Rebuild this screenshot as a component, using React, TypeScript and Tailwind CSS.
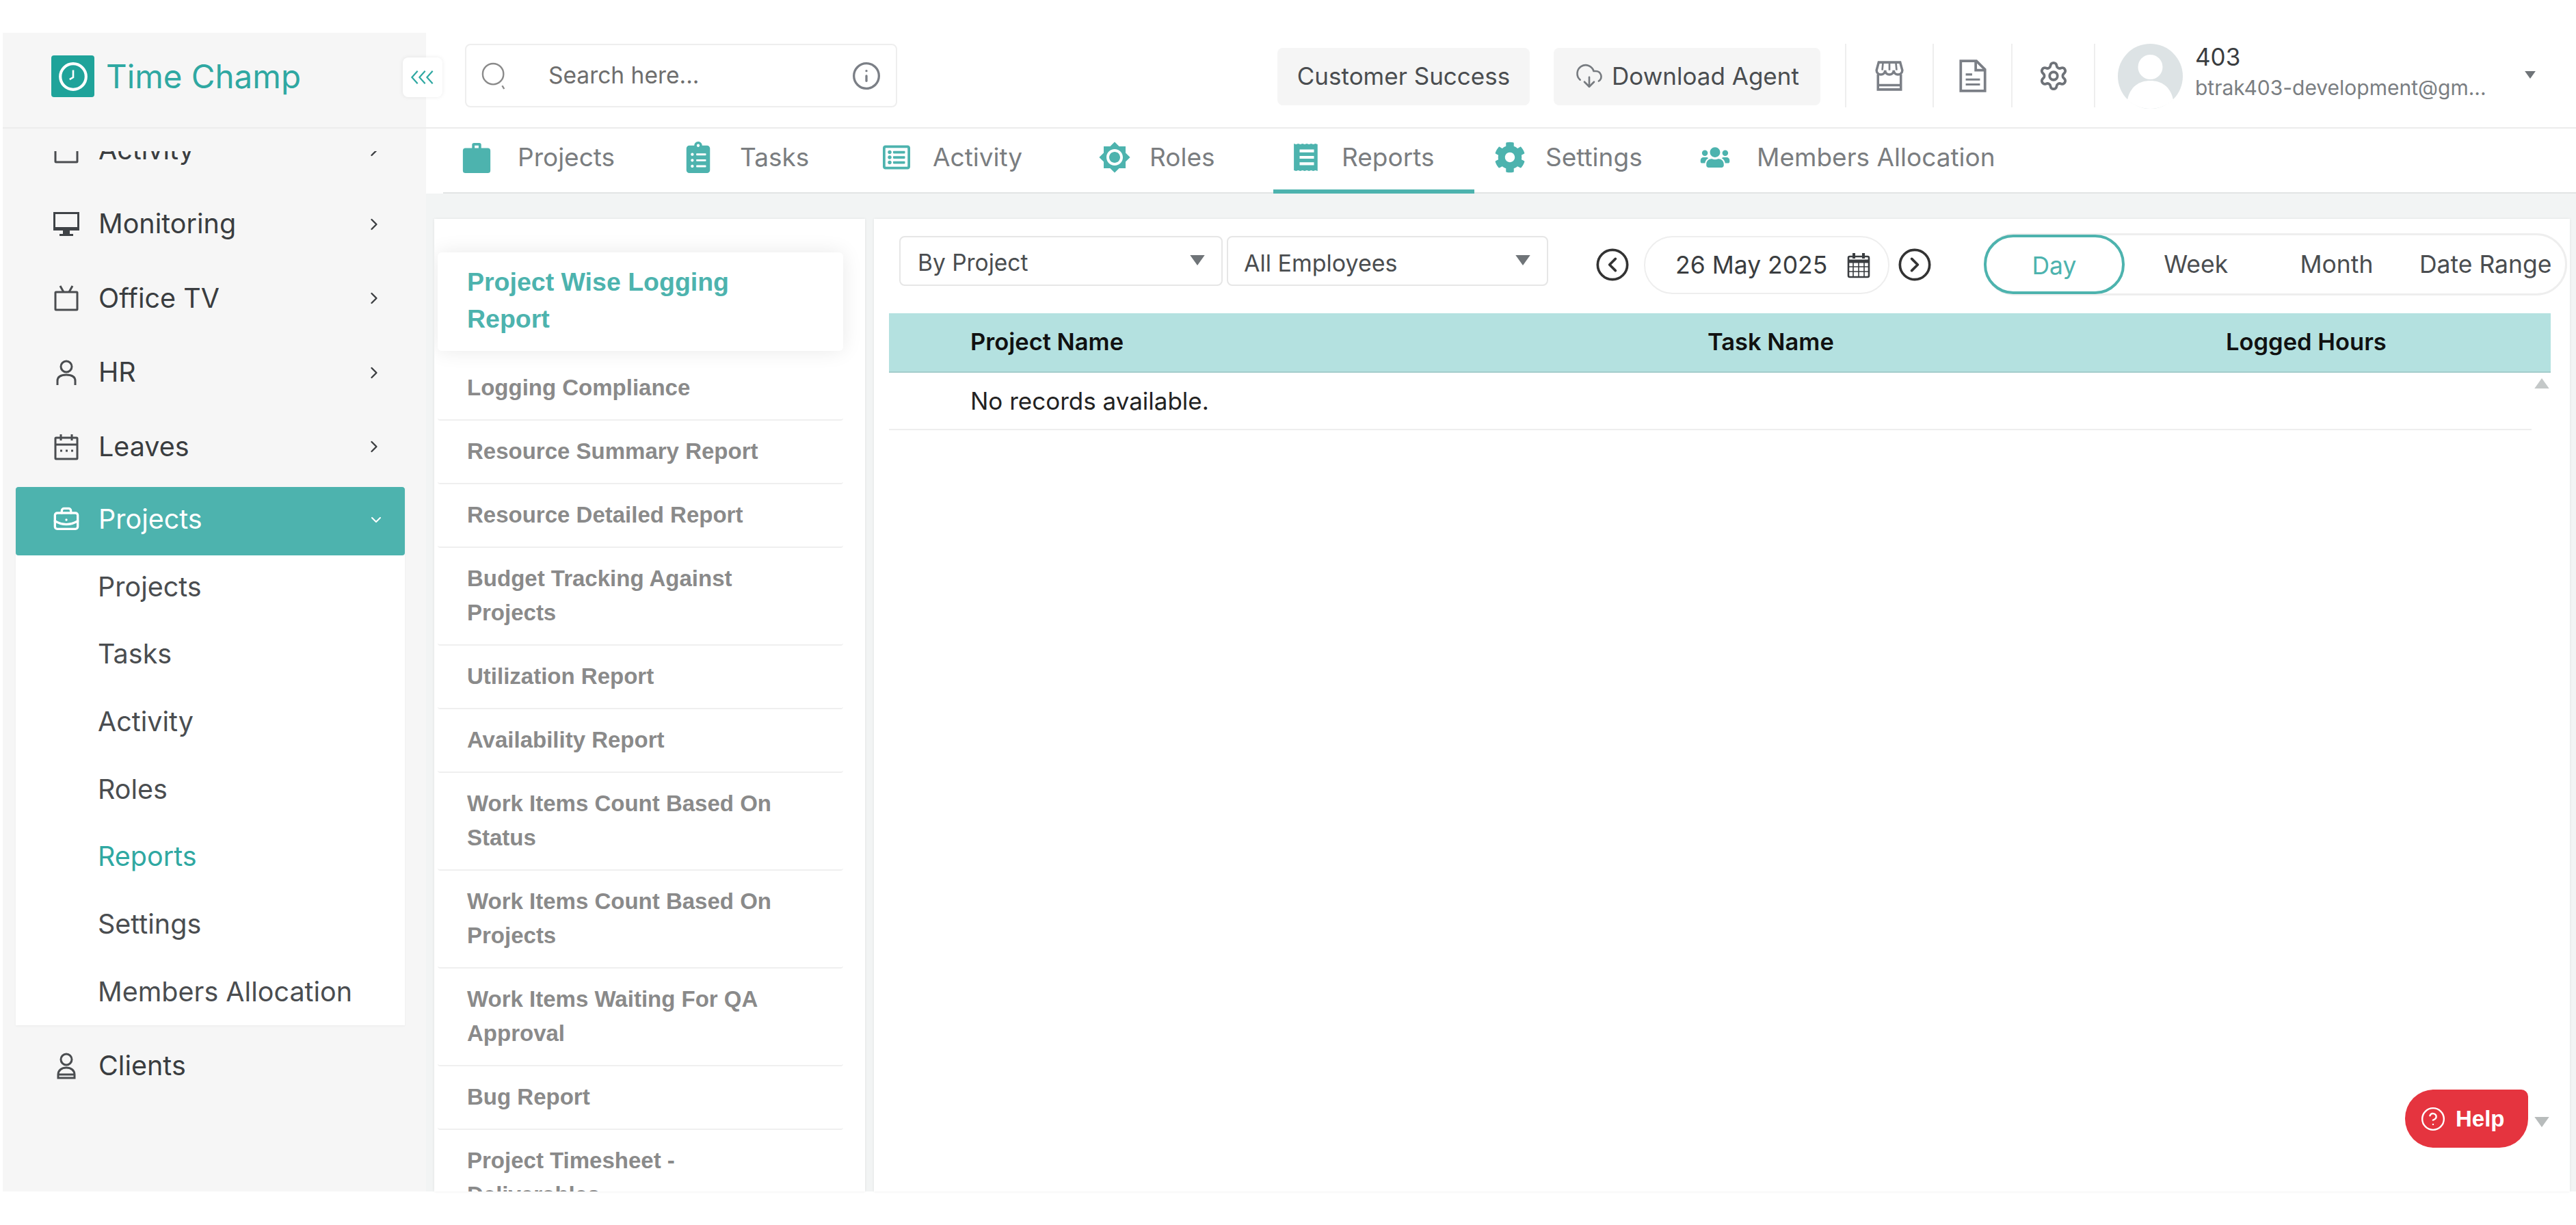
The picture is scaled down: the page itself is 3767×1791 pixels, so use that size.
import React from "react";
import { ChevronRight, ChevronDown, Info, CloudDownload, Settings, CircleChevronLeft, CircleChevronRight, BriefcaseBusiness, CircleHelp } from "lucide-react";
import { FaClipboardList, FaRegListAlt, FaCog, FaUsers } from "react-icons/fa";
import { MdBrightness7 } from "react-icons/md";

const Caret = ({ cls }: { cls: string }) => (
  <svg viewBox="0 0 20 14" className={cls}><path d="M0 0h20L10 14z" fill="currentColor" /></svg>
);

const MonitorIco = () => (
  <svg viewBox="0 0 40 40" className="w-[40px] h-[40px] text-[#3f4347]"><path fill="currentColor" d="M1 2h38v27H1z" /><path fill="#f6f6f6" d="M4 5h32v19H4z" /><path fill="currentColor" d="M15 29h10v5h5v3H10v-3h5z" /></svg>
);
const TvIco = () => (
  <svg viewBox="0 0 40 40" className="w-[40px] h-[40px] text-[#4a4d50]" fill="none" stroke="currentColor" strokeWidth="3"><rect x="4" y="11" width="32" height="26" rx="1" /><path d="M11 2l5 9M29 2l-5 9" /></svg>
);
const UserIco = () => (
  <svg viewBox="0 0 40 40" className="w-[40px] h-[40px] text-[#4a4d50]" fill="none" stroke="currentColor" strokeWidth="3"><circle cx="20" cy="11" r="8" /><path d="M7 38v-6c0-6 5-9 13-9s13 3 13 9v6" /></svg>
);
const CalIco = () => (
  <svg viewBox="0 0 40 40" className="w-[40px] h-[40px] text-[#4a4d50]" fill="none" stroke="currentColor" strokeWidth="3"><rect x="4" y="7" width="32" height="31" rx="1" /><path d="M4 17h32M12 2v9M28 2v9M11 26h3M19 26h3M27 26h3" /></svg>
);
const ClientIco = () => (
  <svg viewBox="0 0 40 40" className="w-[40px] h-[40px] text-[#4a4d50]" fill="none" stroke="currentColor" strokeWidth="3"><circle cx="20" cy="11" r="8" /><path d="M8 38v-5c0-6 5-10 12-10s12 4 12 10v5z" /><path d="M8 33h24" /></svg>
);
const SearchIco = () => (
  <svg viewBox="0 0 40 46" className="w-[38px] h-[46px] text-[#8a8a8a]" fill="none" stroke="currentColor" strokeWidth="2.5"><circle cx="18" cy="20" r="16" /><path d="M32 38l3 5" /></svg>
);
const ReportIco = () => (
  <svg viewBox="0 0 36 40" className="w-[38px] h-[42px] text-[#4db3ae]"><path fill="currentColor" d="M0 1l3 1 3-1 3 1 3-1 3 1 3-1 3 1 3-1 3 1 3-1 3 1v37l-3-1-3 1-3-1-3 1-3-1-3 1-3-1-3 1-3-1-3 1-3-1z" /><path fill="#fff" d="M8 9h20v4H8zM8 18h20v4H8zM8 27h20v4H8z" /></svg>
);
const CaseIco = () => (
  <svg viewBox="0 0 42 48" className="w-[42px] h-[46px] text-[#4db3ae]"><path fill="currentColor" d="M14 10V5a3 3 0 0 1 3-3h8a3 3 0 0 1 3 3v5h10a4 4 0 0 1 4 4v30a4 4 0 0 1-4 4H4a4 4 0 0 1-4-4V14a4 4 0 0 1 4-4zm4 0h6V6h-6z" /></svg>
);
const StoreIco = () => (
  <svg viewBox="0 0 44 44" className="w-[46px] h-[46px] text-[#7b7f86]" fill="none" stroke="currentColor" strokeWidth="3.4"><path d="M4 14l3-11h30l3 11c0 4-3 6-6 6s-6-2-6-6c0 4-3 6-6 6s-6-2-6-6c0 4-3 6-6 6s-6-2-6-6z" /><path d="M13 3l-1 11M22 3v11M31 3l1 11" strokeWidth="2.6" /><path d="M6 20v21h32V20M6 35h32" /></svg>
);
const DocIco = () => (
  <svg viewBox="0 0 40 48" className="w-[42px] h-[50px] text-[#7b7f86]" fill="none" stroke="currentColor" strokeWidth="3.6"><path d="M3 3h22l12 12v30H3z" /><path d="M24 3v13h13" /><path d="M10 22h9M10 29h20M10 36h20" strokeWidth="3" /></svg>
);
const CalendarGrid = () => (
  <svg viewBox="0 0 34 38" className="w-[34px] h-[38px] text-[#3a3d40]" fill="none" stroke="currentColor"><rect x="2" y="6" width="30" height="30" rx="2" strokeWidth="2.6" /><path d="M2 13h30" strokeWidth="5" /><path d="M10 1v8M24 1v8" strokeWidth="4" /><path d="M9 15v20M17 15v20M25 15v20M2 21h30M2 28h30" strokeWidth="1.6" /></svg>
);
const ChevLeftTriple = () => (
  <svg viewBox="0 0 40 24" className="w-[38px] h-[22px] text-[#2fa8a2]" fill="none" stroke="currentColor" strokeWidth="2.4"><path d="M12 2L3 12l9 10M24 2l-9 10 9 10M36 2l-9 10 9 10" /></svg>
);
const Logo = () => (
  <div className="w-[63px] h-[61px] bg-[#1fa39a] rounded-[4px] flex items-center justify-center">
    <svg viewBox="0 0 44 44" className="w-[46px] h-[46px]" fill="none" stroke="#fff"><circle cx="22" cy="22" r="18" strokeWidth="4" /><path d="M22 13v10l-5 3" strokeWidth="2.5" /></svg>
  </div>
);

const navRows = [
  { label: "Activity", icon: <TvIco />, mt: "-mt-[54px]" },
  { label: "Monitoring", icon: <MonitorIco />, mt: "" },
  { label: "Office TV", icon: <TvIco />, mt: "" },
  { label: "HR", icon: <UserIco />, mt: "" },
  { label: "Leaves", icon: <CalIco />, mt: "" },
];

const subs = ["Projects", "Tasks", "Activity", "Roles", "Reports", "Settings", "Members Allocation"];

const reports = [
  "Logging Compliance",
  "Resource Summary Report",
  "Resource Detailed Report",
  "Budget Tracking Against Projects",
  "Utilization Report",
  "Availability Report",
  "Work Items Count Based On Status",
  "Work Items Count Based On Projects",
  "Work Items Waiting For QA Approval",
  "Bug Report",
  "Project Timesheet - Deliverables",
];

const tabs = [
  { label: "Projects", w: "w-[324px]", gap: "mr-[36px]", pl: "pl-[25px]", icon: <CaseIco /> },
  { label: "Tasks", w: "w-[290px]", gap: "mr-[37px]", pl: "pl-[25px]", icon: <FaClipboardList className="w-[42px] h-[46px]" /> },
  { label: "Activity", w: "w-[319px]", gap: "mr-[29px]", pl: "pl-[25px]", icon: <FaRegListAlt className="w-[40px] h-[40px]" /> },
  { label: "Roles", w: "w-[281px]", gap: "mr-[27px]", pl: "pl-[25px]", icon: <MdBrightness7 className="w-[52px] h-[52px]" /> },
  { label: "Reports", w: "w-[294px]", gap: "mr-[27px]", pl: "pl-[25px]", icon: <ReportIco />, active: true },
  { label: "Settings", w: "w-[303px]", gap: "mr-[28px]", pl: "pl-[28px]", icon: <FaCog className="w-[46px] h-[46px]" /> },
  { label: "Members Allocation", w: "w-[480px]", gap: "mr-[37px]", pl: "pl-[25px]", icon: <FaUsers className="w-[50px] h-[34px]" /> },
];

export default function App() {
  return (
    <div className="w-[3767px] h-[1791px] bg-white overflow-hidden font-['Inter',sans-serif] pt-[48px] pb-[49px] pl-[4px] flex relative">
      <aside className="w-[619px] shrink-0 bg-[#f6f6f6] flex flex-col relative">
        <div className="h-[140px] shrink-0 border-b-[2px] border-[#ececec] flex items-start pl-[71px] pt-[33px]">
          <Logo />
          <span className="ml-[17px] text-[#2fa8a2] text-[47.5px] leading-[61px]">Time Champ</span>
        </div>
        <button className="absolute left-[585px] top-[36px] w-[58px] h-[58px] bg-white rounded-[8px] shadow-[0_0_6px_rgba(0,0,0,0.08)] flex items-center justify-center">
          <ChevLeftTriple />
        </button>
        <div className="pt-[33px] flex-1 min-h-0 flex flex-col">
          <div className="overflow-hidden flex-1 min-h-0">
            {navRows.map((r) => (
              <div key={r.label} className={`h-[108.4px] pb-[3px] flex items-center pl-[73px] pr-[62px] ${r.mt} text-[#3a3d40]`}>
                <span className="w-[40px] flex justify-center">{r.icon}</span>
                <span className="ml-[27px] text-[39.500px] flex-1">{r.label}</span>
                <ChevronRight className="w-[28px] h-[28px]" strokeWidth={2} />
              </div>
            ))}
            <div className="ml-[19px] w-[569px] mt-[3px] bg-white shadow-[0_1px_3px_rgba(0,0,0,0.05)]">
              <div className="h-[100px] pb-[4px] bg-[#4db3ae] rounded-[4px] flex items-center pl-[54px] pr-[30px] text-white">
                <BriefcaseBusiness className="w-[40px] h-[40px]" strokeWidth={2} />
                <span className="ml-[27px] text-[39.500px] flex-1">Projects</span>
                <ChevronDown className="w-[24px] h-[24px]" />
              </div>
              <div className="h-[687px]">
                {subs.map((s, i) => (
                  <div key={s} className={`h-[98.7px] pb-[6px] pl-[120px] flex items-center text-[39.500px] ${i === 4 ? "text-[#2fa8a2]" : "text-[#4a4d50]"}`}>{s}</div>
                ))}
              </div>
            </div>
            <div className="mt-[7px] h-[108px] pb-[3px] flex items-center pl-[73px] text-[#3a3d40]">
              <span className="w-[40px] flex justify-center"><ClientIco /></span>
              <span className="ml-[27px] text-[39.500px]">Clients</span>
            </div>
          </div>
        </div>
      </aside>

      <main className="flex-1 flex flex-col min-w-0">
        <header className="h-[140px] shrink-0 border-b-[2px] border-[#ececec] flex items-start pt-[16px]">
          <div className="ml-[57px] w-[632px] h-[93px] border-[2px] border-[#eeeeee] rounded-[8px] flex items-center pl-[22px] pr-[21px] text-[#6e6e6e]">
            <SearchIco />
            <span className="ml-[60px] text-[33.500px] flex-1">Search here...</span>
            <Info className="w-[44px] h-[44px] text-[#7b7f86]" strokeWidth={1.8} />
          </div>
          <div className="ml-[556px] mt-[6px] w-[369px] h-[84px] pb-[2px] bg-[#f5f5f5] rounded-[8px] flex items-center justify-center text-[35px] text-[#4a4d50]">Customer Success</div>
          <div className="ml-[35px] mt-[6px] w-[390px] h-[84px] pb-[2px] bg-[#f5f5f5] rounded-[8px] flex items-center justify-center text-[35px] text-[#4a4d50]">
            <CloudDownload className="w-[42px] h-[42px] text-[#777b80] mr-[12px]" strokeWidth={1.5} />
            Download Agent
          </div>
          <div className="ml-[36px] w-[128px] h-[93px] border-l-[2px] border-[#eeeeee] flex items-center justify-center"><StoreIco /></div>
          <div className="w-[115px] h-[93px] border-l-[2px] border-[#eeeeee] flex items-center justify-center"><DocIco /></div>
          <div className="w-[121px] h-[93px] border-l-[2px] border-[#eeeeee] flex items-center justify-center"><Settings className="w-[46px] h-[46px] text-[#6e7278]" strokeWidth={2} /></div>
          <div className="h-[93px] border-l-[2px] border-[#eeeeee] pl-[33px] flex items-start">
            <svg viewBox="0 0 95 95" className="w-[95px] h-[95px]">
              <circle cx="47.5" cy="47.5" r="47.5" fill="#dde3e5" />
              <circle cx="47.5" cy="34" r="18" fill="#fff" />
              <path d="M14 82c4-20 18-28 33.500-28S77 62 81 82c-9 8-21 13-33.500 13S23 90 14 82z" fill="#fff" />
            </svg>
            <div className="ml-[18px] w-[432px] leading-none">
              <div className="text-[35px] text-[#3a3d40] -mt-[2px] h-[42px] flex items-center">403</div>
              <div className="text-[30px] text-[#7a7e82] mt-[3px] h-[42px] flex items-center whitespace-nowrap">btrak403-development@gm...</div>
            </div>
            <Caret cls="w-[16px] h-[11px] text-[#6f7478] mt-[40px] ml-[50px]" />
          </div>
        </header>

        <nav className="h-[95px] shrink-0 bg-white border-b-[2px] border-[#e2e4e4] flex ml-[25px]">
          {tabs.map((t) => (
            <div key={t.label} className={`${t.w} ${t.pl} shrink-0 h-[95px] flex items-center ${t.active ? "border-b-[6px] border-[#4db3ae] pb-[6px]" : "pb-[12px]"}`}>
              <span className={`w-[48px] ${t.gap} flex justify-center text-[#4db3ae]`}>{t.icon}</span>
              <span className="text-[37px] text-[#7a7d80] whitespace-nowrap">{t.label}</span>
            </div>
          ))}
        </nav>

        <div className="flex-1 min-h-0 bg-[#f2f4f4] pt-[37px] flex">
          <section className="ml-[12px] w-[630px] bg-white overflow-hidden pt-[49px] pl-[5px] shadow-[0_0_4px_rgba(0,0,0,0.08)] font-['Liberation_Sans',sans-serif] font-bold">
            <div className="w-[593px] h-[144px] pb-[4px] px-[43px] flex items-center bg-white rounded-[6px] shadow-[0_0_30px_rgba(0,0,0,0.09)] text-[#4db3ae] text-[37.500px] leading-[54px] relative">
              <span>Project Wise Logging Report</span>
            </div>
            <div className="w-[593px] pt-[9px]">
              {reports.map((r) => (
                <div key={r} className="pt-[20px] pb-[21px] px-[43px] border-b-[2px] border-[#efefef] rounded-b-[4px] text-[33px] leading-[50px] text-[#8a8a8a]">{r}</div>
              ))}
            </div>
          </section>

          <section className="ml-[13px] w-[2480px] bg-white pt-[25px] relative shadow-[0_0_4px_rgba(0,0,0,0.08)]">
            <div className="h-[87px] flex items-start pl-[37px]">
              <div className="w-[473px] h-[73px] border-[2px] border-[#e6e6e6] rounded-[8px] flex items-center pl-[25px] pr-[24px] text-[33.500px] text-[#4a4d50]">
                <span className="flex-1 pt-[6px]">By Project</span>
                <Caret cls="w-[22px] h-[15px] text-[#6f7478] mb-[2px]" />
              </div>
              <div className="ml-[6px] w-[470px] h-[73px] border-[2px] border-[#e6e6e6] rounded-[8px] flex items-center pl-[23px] pr-[24px] text-[34px] text-[#4a4d50]">
                <span className="flex-1 pt-[6px]">All Employees</span>
                <Caret cls="w-[22px] h-[15px] text-[#6f7478] mb-[2px]" />
              </div>
              <CircleChevronLeft className="ml-[68px] mt-[16px] w-[52px] h-[52px] text-[#333]" strokeWidth={1.7} />
              <div className="ml-[20px] w-[359px] h-[85px] border-[2px] border-[#eeeeee] rounded-[42px] flex items-center pl-[44px] text-[35.500px] text-[#3a3d40]">
                <span className="flex-1 whitespace-nowrap">26 May 2025</span>
                <CalendarGrid />
                <span className="w-[26px]" />
              </div>
              <CircleChevronRight className="ml-[11px] mt-[16px] w-[52px] h-[52px] text-[#333]" strokeWidth={1.7} />
              <div className="ml-[75px] -mt-[4px] w-[853px] h-[91px] border-[3px] border-[#eeeeee] rounded-[45px] flex items-center text-[35.500px] text-[#4a4d50]">
                <div className="w-[207px] h-[87px] pt-[4px] border-[4px] border-[#4db3ae] rounded-[43px] flex items-center justify-center text-[#4db3ae] -ml-[3px]">Day</div>
                <div className="w-[210px] text-center">Week</div>
                <div className="w-[204px] text-center">Month</div>
                <div className="w-[234px] text-center whitespace-nowrap">Date Range</div>
              </div>
            </div>
            <div className="ml-[22px] mt-[26px] w-[2430px] h-[87px] bg-[#b4e1e0] border-b-[2px] border-[#a4cccb] flex items-center font-semibold text-[34.500px] text-[#111] pb-[2px]">
              <span className="ml-[119px] w-[1078px]">Project Name</span>
              <span className="w-[758px]">Task Name</span>
              <span>Logged Hours</span>
            </div>
            <div className="ml-[22px] w-[2402px] h-[84px] border-b-[2px] border-[#eeeeee] flex items-center pl-[119px] text-[35px] text-[#222]">No records available.</div>
            <Caret cls="absolute left-[2428px] top-[233px] w-[22px] h-[15px] rotate-180 text-[#c4c8c8]" />
            <div className="absolute left-[2239px] top-[1273px] w-[180px] h-[85px] bg-[#e5343f] rounded-tl-[42px] rounded-br-[42px] rounded-tr-[10px] rounded-bl-[42px] flex items-center pl-[22px] text-white font-['Liberation_Sans',sans-serif] font-bold text-[33px]">
              <CircleHelp className="w-[38px] h-[38px]" strokeWidth={1.5} />
              <span className="ml-[14px]">Help</span>
            </div>
            <Caret cls="absolute left-[2428px] top-[1313px] w-[22px] h-[15px] text-[#b8bcbc]" />
          </section>
        </div>
      </main>
    </div>
  );
}
